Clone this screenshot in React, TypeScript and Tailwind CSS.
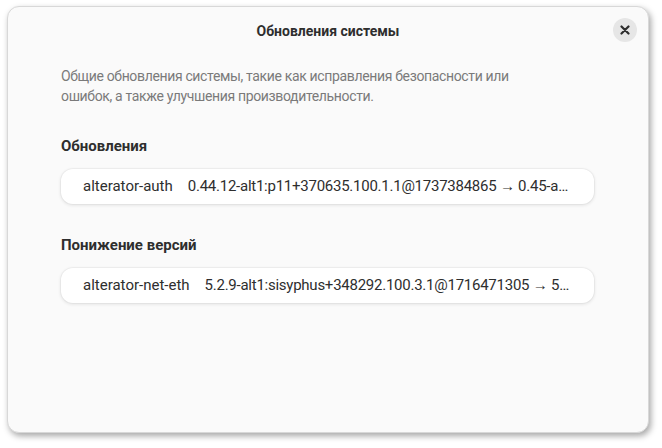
import React from "react";

function Row({ name, version }: { name: string; version: string }) {
  return (
    <div className="flex h-[35px] items-center rounded-[12px] bg-white pl-[22px] pr-[24px] shadow-[0_0_0_1px_rgba(0,0,0,0.03),0_1px_3px_1px_rgba(0,0,0,0.07)]">
      <span className="shrink-0 text-[15px] text-[#2e2e2e]">{name}</span>
      <span className="ml-[15px] min-w-0 truncate text-[15px] tracking-[-0.25px] text-[#2e2e2e]">{version}</span>
    </div>
  );
}

export default function App() {
  return (
    <div
      className="h-[448px] w-[662px] bg-white pl-[7px] pt-[6px]"
      style={{ fontFamily: "Roboto, 'Noto Sans', sans-serif" }}
    >
      <div className="flex h-[427px] w-[642px] flex-col rounded-[12px] border border-[#d8d8d8] bg-[#fafafa] shadow-[2px_3px_6px_rgba(0,0,0,0.35)]">
        <div className="relative flex h-[48px] shrink-0 items-center justify-center">
          <span className="text-[14px] font-bold text-[#2e2e2e]">Обновления системы</span>
          <button className="absolute right-[11px] top-[11px] flex h-[24px] w-[24px] items-center justify-center rounded-full bg-[#e6e6e6]">
            <svg width="10" height="10" viewBox="0 0 10 10">
              <path d="M1.5 1.5 L8.5 8.5 M8.5 1.5 L1.5 8.5" stroke="#2e2e2e" strokeWidth="2.2" strokeLinecap="round" />
            </svg>
          </button>
        </div>
        <div className="flex flex-col pl-[53px] pr-[54px] pt-[11px]">
          <p className="text-[14px] leading-[20px] tracking-[-0.35px] text-[#7a7a7a]">
            Общие обновления системы, такие как исправления безопасности или
            <br />
            ошибок, а также улучшения производительности.
          </p>
          <h2 className="mt-[30px] text-[15px] font-bold leading-[20px] text-[#2e2e2e]">Обновления</h2>
          <div className="mt-[13px]">
            <Row name="alterator-auth" version="0.44.12-alt1:p11+370635.100.1.1@1737384865 → 0.45-alt1:p11+371234.100.1.1@1738000000" />
          </div>
          <h2 className="mt-[31px] text-[15px] font-bold leading-[20px] text-[#2e2e2e]">Понижение версий</h2>
          <div className="mt-[13px]">
            <Row name="alterator-net-eth" version="5.2.9-alt1:sisyphus+348292.100.3.1@1716471305 → 5.2.8-alt1:p11+340000.100.1.1@1700000000" />
          </div>
        </div>
      </div>
    </div>
  );
}
